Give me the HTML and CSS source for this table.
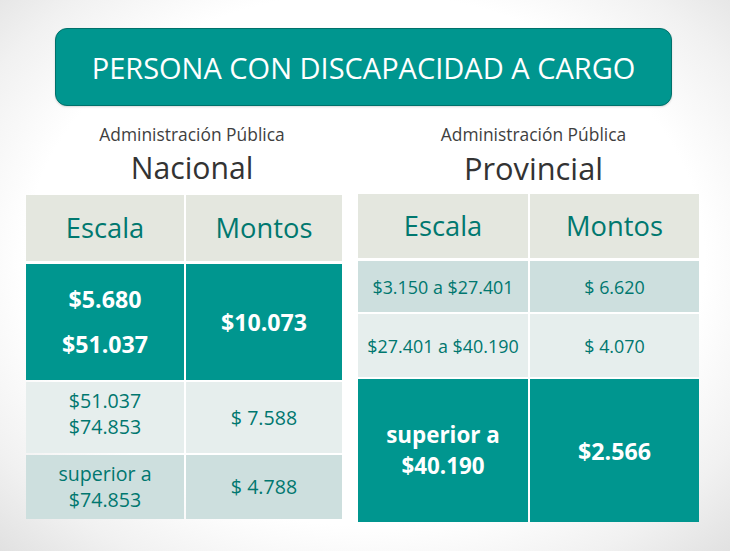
FILE: index.html
```html
<!DOCTYPE html>
<html lang="es">
<head>
<meta charset="utf-8">
<title>Persona con discapacidad a cargo</title>
<link rel="stylesheet" href="styles.css">
</head>
<body>
<div class="slide">
  <header class="banner"><h1 class="title">PERSONA CON DISCAPACIDAD A CARGO</h1></header>
  <div class="columns">
    <section class="col col-nac">
      <div class="caption cap-nac">
        <p class="sub">Administración Pública</p>
        <p class="name">Nacional</p>
      </div>
      <div class="tbl tbl-nac">
        <div class="cell head">Escala</div>
        <div class="cell head">Montos</div>
        <div class="cell teal big two">$5.680<br>$51.037</div>
        <div class="cell teal big">$10.073</div>
        <div class="cell light twol raise">$51.037<br>$74.853</div>
        <div class="cell light">$ 7.588</div>
        <div class="cell mid twol">superior a<br>$74.853</div>
        <div class="cell mid">$ 4.788</div>
      </div>
    </section>
    <section class="col col-prov">
      <div class="caption cap-prov">
        <p class="sub">Administración Pública</p>
        <p class="name name-prov">Provincial</p>
      </div>
      <div class="tbl tbl-prov">
        <div class="cell head">Escala</div>
        <div class="cell head">Montos</div>
        <div class="cell mid sm">$3.150 a $27.401</div>
        <div class="cell mid sm">$ 6.620</div>
        <div class="cell light sm">$27.401 a $40.190</div>
        <div class="cell light sm">$ 4.070</div>
        <div class="cell teal big twob">superior a<br>$40.190</div>
        <div class="cell teal big">$2.566</div>
      </div>
    </section>
  </div>
</div>
</body>
</html>
```
FILE: styles.css
```css
html, body {
  margin: 0;
  padding: 0;
}
body {
  width: 730px;
  height: 551px;
  overflow: hidden;
  font-family: "Open Sans", "Liberation Sans", sans-serif;
}
.slide {
  width: 730px;
  height: 551px;
  box-sizing: border-box;
  padding-top: 28px;
  background: radial-gradient(ellipse 75% 78% at 50% 47%, #ffffff 62%, #f1f1f1 80%, #dcdcdc 100%);
}
.banner {
  margin: 0 58px 0 55px;
  height: 78px;
  box-sizing: border-box;
  border: 1.5px solid #00716b;
  border-radius: 12px;
  background: #00968f;
  display: flex;
  align-items: center;
  justify-content: center;
  box-shadow: 0 1px 2px rgba(0,0,0,0.15);
}
.title {
  margin: 0;
  color: #ffffff;
  font-weight: 400;
  font-size: 29px;
  line-height: 1;
}
.columns {
  display: flex;
  gap: 16px;
  padding-left: 26px;
  margin-top: 18px;
}
.col-nac { width: 316px; }
.col-prov { width: 341px; }
.caption {
  text-align: center;
}
.cap-nac { padding-left: 16px; margin-bottom: 9px; }
.cap-prov { padding-left: 10px; margin-bottom: 8px; }
.sub {
  margin: 0;
  font-size: 17.4px;
  line-height: 20px;
  color: #3f3f3f;
}
.name {
  margin: 6px 0 0 0;
  font-size: 30.2px;
  line-height: 36px;
  color: #333333;
}
.name-prov { font-size: 30.8px; }
.tbl {
  display: grid;
  column-gap: 2px;
  row-gap: 2px;
}
.tbl-nac {
  grid-template-columns: 158px 156px;
  grid-template-rows: 67px 116px 71px 64px;
}
.tbl-prov {
  grid-template-columns: 170px 169px;
  grid-template-rows: 65px 51px 63px 143px;
}
.tbl .head { margin-bottom: 1px; }
.cell {
  display: flex;
  align-items: center;
  justify-content: center;
  text-align: center;
  color: #00776f;
  font-size: 19.6px;
  line-height: 26px;
}
.head {
  background: #e4e7df;
  font-size: 27.3px;
  color: #00786f;
}
.teal {
  background: #00968f;
  color: #ffffff;
}
.light { background: #e6eeed; }
.mid { background: #cddfde; }
.big {
  font-weight: 700;
  font-size: 23.2px;
}
.two { line-height: 45px; }
.twol { line-height: 26px; }
.raise { padding-bottom: 8px; box-sizing: border-box; }
.twob { line-height: 31px; padding-bottom: 2px; font-size: 22.4px; }
.sm {
  font-size: 17.9px;
}
```
